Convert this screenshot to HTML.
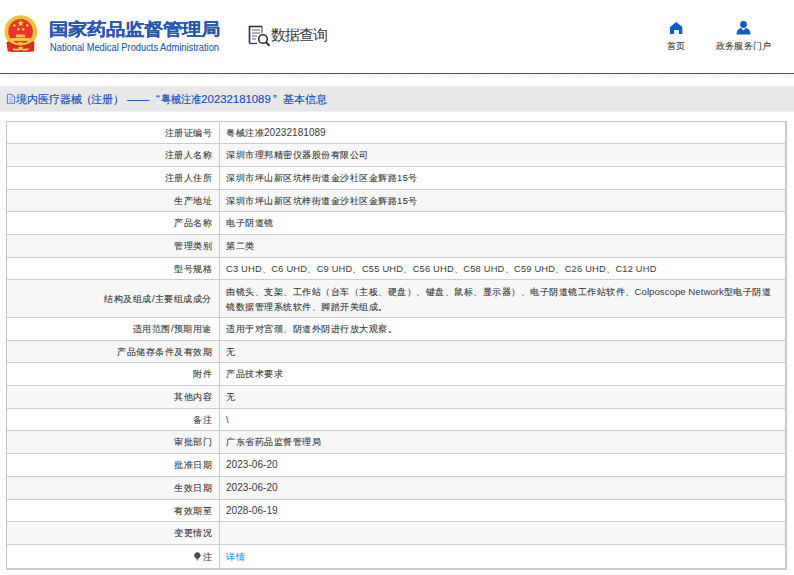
<!DOCTYPE html>
<html><head><meta charset="utf-8">
<style>
html,body{margin:0;padding:0;background:#fff;}
body{width:794px;height:575px;overflow:hidden;position:relative;text-spacing-trim:space-all;font-family:"Liberation Sans",sans-serif;color:#333;}
.abs{position:absolute;white-space:nowrap;}
#title{left:49px;top:18px;font-size:19px;line-height:26px;color:#2657b0;font-weight:bold;letter-spacing:0px;transform:scaleY(0.88);transform-origin:0 0;-webkit-text-stroke:0.12px #2657b0;}
#sub{left:50px;top:41.5px;font-size:10px;line-height:12px;color:#2657b0;-webkit-text-stroke:0.1px #2657b0;transform:scaleX(0.93);transform-origin:0 0;}
#sj{left:270.5px;top:25px;font-size:15px;letter-spacing:-1px;line-height:20px;color:#383838;}
.nav{font-size:9.2px;line-height:12px;color:#3c3c3c;-webkit-text-stroke:0.12px #3c3c3c;letter-spacing:0.35px;}
#bline{left:0;top:73px;width:794px;height:1px;background:#0a5cc2;}
#hatch{left:0;top:74px;width:794px;height:3px;background:repeating-linear-gradient(135deg,#fff 0,#fff 1.4px,#ececec 1.4px,#ececec 2.1px);}
#band{left:0;top:86px;width:794px;height:25px;background:#e8e8e8;box-shadow:0 1px 0 #eef1f6;}
.bt{top:90px;font-size:11px;line-height:18px;color:#0c4fc4;-webkit-text-stroke:0.15px #0c4fc4;}
#tbl{position:absolute;left:0;top:0;}
.bg{position:absolute;left:7px;width:778px;background:#f7f7f7;}
.hl{position:absolute;left:7px;width:778px;height:1px;background:#cdcbcd;}
.lab{position:absolute;left:7px;width:205px;text-align:right;font-size:9.3px;letter-spacing:0.5px;line-height:22px;color:#383838;-webkit-text-stroke:0.1px #383838;white-space:nowrap;}
.val{position:absolute;left:226px;width:556px;font-size:9.3px;letter-spacing:0.5px;line-height:22px;color:#383838;-webkit-text-stroke:0.1px #383838;white-space:nowrap;}
.tall{line-height:15px;padding-top:4px;box-sizing:border-box;}
.lab.tall{line-height:37px;padding-top:1px;}
.link{color:#2d8cf0;-webkit-text-stroke:0.1px #2d8cf0;}
.en{letter-spacing:0.05px;font-size:10px;-webkit-text-stroke:0;color:#3a3a3a;}
.en3{letter-spacing:0.2px;-webkit-text-stroke:0;color:#3a3a3a;}
.en2{letter-spacing:0;font-size:9.7px;-webkit-text-stroke:0;color:#3a3a3a;}
.pin{display:inline-block;width:6px;height:8px;background:#555;border-radius:50% 50% 50% 50%/40% 40% 60% 60%;margin-right:1px;vertical-align:-1px;}
</style></head><body>
<!-- emblem -->
<svg class="abs" style="left:0;top:0" width="44" height="56" viewBox="0 0 44 56">
  <path d="M6.5 42 L34.5 42 L33.8 51.2 Q20.7 52.2 7.8 51.2 Z" fill="#d8261c"/>
  <circle cx="20.9" cy="31.6" r="16.4" fill="#f2c232"/>
  <circle cx="20.6" cy="31.4" r="12.3" fill="#e8352a"/>
  <polygon points="20.6,19.8 21.5,22.2 24,22.3 22,23.8 22.7,26.3 20.6,24.9 18.5,26.3 19.2,23.8 17.2,22.3 19.7,22.2" fill="#f8d848"/>
  <circle cx="14.4" cy="25.5" r="1.2" fill="#f8d848"/>
  <circle cx="27.2" cy="25.5" r="1.2" fill="#f8d848"/>
  <circle cx="18.4" cy="29.2" r="1.2" fill="#f8d848"/>
  <circle cx="23.2" cy="29.2" r="1.2" fill="#f8d848"/>
  <path d="M15.3 35.8 L17 34.4 H24 L25.8 35.8 Z" fill="#f8d848"/>
  <rect x="16" y="35.8" width="9" height="1.6" fill="#f6cf45"/>
  <rect x="10.9" y="38.1" width="19.2" height="2.8" fill="#f6cf45"/>
  <path d="M8.2 40.8 Q20.7 49.6 33.2 40.8 L33.8 51.2 Q20.7 52.2 7.8 51.2 Z" fill="#e02a1e"/>
  <path d="M8.5 40.3 Q20.7 49.2 32.8 40.3" stroke="#f2c838" stroke-width="1.4" fill="none"/>
  <ellipse cx="20.5" cy="43.6" rx="3.4" ry="1.7" fill="#f2c838"/>
  <path d="M12.5 48 Q16.5 49.5 20.6 48.3 Q24.8 49.5 28.8 48 L28 50.3 Q24.5 51 20.6 50 Q16.7 51 13.3 50.3 Z" fill="#f0c848"/>
  <ellipse cx="20.7" cy="48.1" rx="2.6" ry="1.3" fill="#f2cc48"/>
</svg>
<div class="abs" id="title">国家药品监督管理局</div>
<div class="abs" id="sub">National Medical Products Administration</div>
<!-- data query icon -->
<svg class="abs" style="left:248px;top:25px" width="24" height="23" viewBox="0 0 24 23">
  <path d="M1.5 18.5 V1.5 H14" stroke="#2a2f45" stroke-width="1.6" fill="none"/>
  <path d="M1.5 18.5 H9" stroke="#2a2f45" stroke-width="1.2" fill="none"/>
  <path d="M14 1.5 V8" stroke="#2a2f45" stroke-width="1" fill="none"/>
  <path d="M4 5 H12 M4 8 H12 M4 11 H9 M4 14 H8" stroke="#666" stroke-width="1" fill="none"/>
  <circle cx="15" cy="14" r="4.3" stroke="#2a2f45" stroke-width="1.6" fill="#fff"/>
  <path d="M18 17.3 L21.5 20.8" stroke="#2a2f45" stroke-width="2" fill="none"/>
</svg>
<div class="abs" id="sj">数据查询</div>
<!-- nav -->
<svg class="abs" style="left:670px;top:22px" width="13" height="12" viewBox="0 0 13 12">
  <path d="M6.3 0 L12.3 5 V12 H9 V8 H4 V12 H0 V5 Z" fill="#0d5cc8"/>
</svg>
<div class="abs nav" style="left:667px;top:40px">首页</div>
<svg class="abs" style="left:736px;top:20px" width="15" height="15" viewBox="0 0 15 15">
  <circle cx="7.5" cy="4.5" r="3.4" fill="#0d5cc8"/>
  <path d="M0.5 14.5 Q0.8 8.6 5 8 L7.5 10.5 L10 8 Q14.2 8.6 14.5 14.5 Z" fill="#0d5cc8"/>
</svg>
<div class="abs nav" style="left:715.5px;top:40px">政务服务门户</div>
<div class="abs" id="bline"></div>
<div class="abs" id="hatch"></div>
<div class="abs" id="band"></div>
<svg class="abs" style="left:6px;top:93px" width="10" height="12" viewBox="0 0 10 12">
  <path d="M1.4 1.3 H5.9 L8.7 4 V10.3 H1.4 Z" stroke="#3d6ad4" stroke-width="0.85" fill="none"/>
  <path d="M5.8 1.3 V3.3 L8.7 4" stroke="#6a8ad8" stroke-width="0.6" fill="none"/>
  <path d="M3 4.3 H5.2 M3 6.3 H7 M3 8.4 H7" stroke="#8a8ad8" stroke-width="0.7"/>
</svg>
<div class="abs bt" id="b1" style="left:16px;letter-spacing:-0.1px">境内医疗器械</div>
<div class="abs bt" id="b2" style="left:81px">（</div>
<div class="abs bt" id="b3" style="left:91px;letter-spacing:-0.2px">注册</div>
<div class="abs bt" id="b4" style="left:113px">）</div>
<div class="abs bt" id="b5" style="left:127px">——</div>
<div class="abs bt" id="b6" style="left:156px">“</div>
<div class="abs bt" id="b7" style="left:160.5px;transform:scaleX(0.905);transform-origin:0 0">粤械注准</div>
<div class="abs bt" id="b8" style="left:201.3px;font-size:11.35px">20232181089</div>
<div class="abs bt" id="b9" style="left:273px">”</div>
<div class="abs bt" id="b10" style="left:283px;letter-spacing:-0.1px">基本信息</div>
<div id="tbl">
<div class="bg" style="top:144px;height:22px"></div>
<div class="bg" style="top:190px;height:21px"></div>
<div class="bg" style="top:235px;height:22px"></div>
<div class="bg" style="top:280px;height:37px"></div>
<div class="bg" style="top:341px;height:21px"></div>
<div class="bg" style="top:386px;height:22px"></div>
<div class="bg" style="top:431px;height:22px"></div>
<div class="bg" style="top:477px;height:22px"></div>
<div class="bg" style="top:522px;height:22px"></div>
<div class="hl" style="top:143px"></div>
<div class="hl" style="top:166px"></div>
<div class="hl" style="top:189px"></div>
<div class="hl" style="top:211px"></div>
<div class="hl" style="top:234px"></div>
<div class="hl" style="top:257px"></div>
<div class="hl" style="top:279px"></div>
<div class="hl" style="top:317px"></div>
<div class="hl" style="top:340px"></div>
<div class="hl" style="top:362px"></div>
<div class="hl" style="top:385px"></div>
<div class="hl" style="top:408px"></div>
<div class="hl" style="top:430px"></div>
<div class="hl" style="top:453px"></div>
<div class="hl" style="top:476px"></div>
<div class="hl" style="top:499px"></div>
<div class="hl" style="top:521px"></div>
<div class="hl" style="top:544px"></div>
<div class="abs" style="left:6px;top:121px;width:781px;height:449px;box-sizing:border-box;border:1px solid #c9c7c9;border-right-width:2px;border-bottom-width:2px"></div>
<div class="abs" style="left:219px;top:121px;width:1px;height:447px;background:#cdcbcd"></div>
<div class="lab " style="top:122px;height:21px">注册证编号</div>
<div class="val " style="top:122px;height:21px">粤械注准<span class=en>20232181089</span></div>
<div class="lab " style="top:144px;height:22px">注册人名称</div>
<div class="val " style="top:144px;height:22px">深圳市理邦精密仪器股份有限公司</div>
<div class="lab " style="top:167px;height:22px">注册人住所</div>
<div class="val " style="top:167px;height:22px">深圳市坪山新区坑梓街道金沙社区金辉路15号</div>
<div class="lab " style="top:190px;height:21px">生产地址</div>
<div class="val " style="top:190px;height:21px">深圳市坪山新区坑梓街道金沙社区金辉路15号</div>
<div class="lab " style="top:212px;height:22px">产品名称</div>
<div class="val " style="top:212px;height:22px">电子阴道镜</div>
<div class="lab " style="top:235px;height:22px">管理类别</div>
<div class="val " style="top:235px;height:22px">第二类</div>
<div class="lab " style="top:258px;height:21px">型号规格</div>
<div class="val " style="top:258px;height:21px"><span class=en3>C3 UHD</span>、<span class=en3>C6 UHD</span>、<span class=en3>C9 UHD</span>、<span class=en3>C55 UHD</span>、<span class=en3>C56 UHD</span>、<span class=en3>C58 UHD</span>、<span class=en3>C59 UHD</span>、<span class=en3>C26 UHD</span>、<span class=en3>C12 UHD</span></div>
<div class="lab tall" style="top:280px;height:37px">结构及组成/主要组成成分</div>
<div class="val tall" style="top:280px;height:37px">由镜头、支架、工作站（台车（主板、硬盘）、键盘、鼠标、显示器）、电子阴道镜工作站软件、<span class=en2>Colposcope Network</span>型电子阴道<br>镜数据管理系统软件、脚踏开关组成。</div>
<div class="lab " style="top:318px;height:22px">适用范围/预期用途</div>
<div class="val " style="top:318px;height:22px">适用于对宫颈、阴道外阴进行放大观察。</div>
<div class="lab " style="top:341px;height:21px">产品储存条件及有效期</div>
<div class="val " style="top:341px;height:21px">无</div>
<div class="lab " style="top:363px;height:22px">附件</div>
<div class="val " style="top:363px;height:22px">产品技术要求</div>
<div class="lab " style="top:386px;height:22px">其他内容</div>
<div class="val " style="top:386px;height:22px">无</div>
<div class="lab " style="top:409px;height:21px">备注</div>
<div class="val " style="top:409px;height:21px">\</div>
<div class="lab " style="top:431px;height:22px">审批部门</div>
<div class="val " style="top:431px;height:22px">广东省药品监督管理局</div>
<div class="lab " style="top:454px;height:22px">批准日期</div>
<div class="val " style="top:454px;height:22px"><span class=en>2023-06-20</span></div>
<div class="lab " style="top:477px;height:22px">生效日期</div>
<div class="val " style="top:477px;height:22px"><span class=en>2023-06-20</span></div>
<div class="lab " style="top:500px;height:21px">有效期至</div>
<div class="val " style="top:500px;height:21px"><span class=en>2028-06-19</span></div>
<div class="lab " style="top:522px;height:22px">变更情况</div>
<div class="val " style="top:522px;height:22px"></div>
<div class="lab " style="top:546px;height:23px"><svg width="7" height="9" viewBox="0 0 7 9" style="vertical-align:-1px;margin-right:1.5px"><path d="M3.4 0.2 C5.3 0.2 6.6 1.6 6.6 3.4 C6.6 4.9 5.6 5.6 4.6 6.3 L4.5 7.4 H2.3 L2.2 6.3 C1.2 5.6 0.2 4.9 0.2 3.4 C0.2 1.6 1.5 0.2 3.4 0.2Z" fill="#4a4a50"/><rect x="2.4" y="7.6" width="2" height="1" fill="#9a9aa0"/></svg>注</div>
<div class="val " style="top:546px;height:23px"><span class='link'>详情</span></div>
</div>
</body></html>
